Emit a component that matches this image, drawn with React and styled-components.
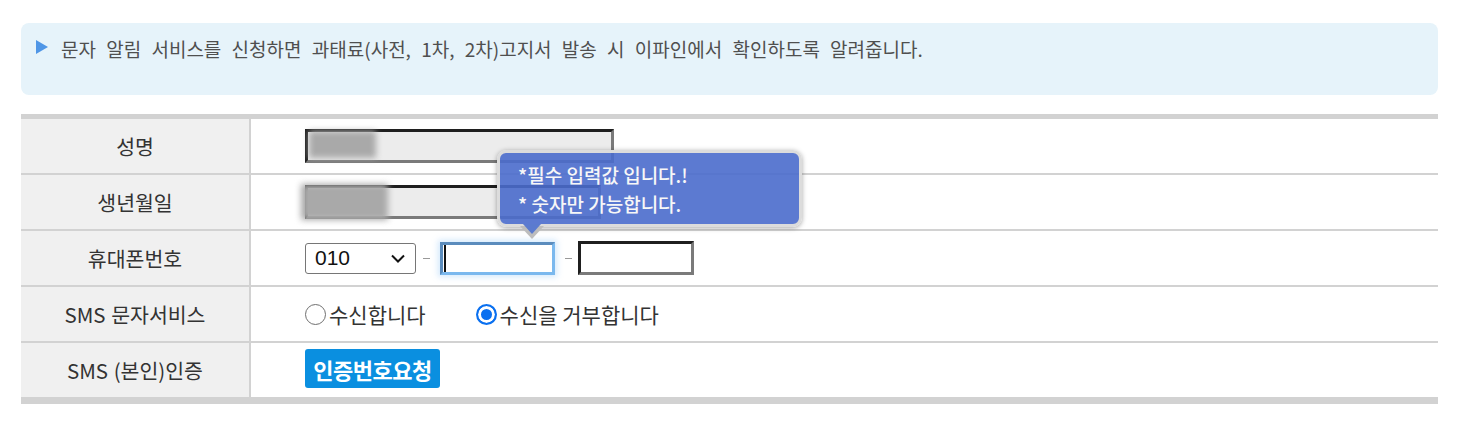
import React from "react";
import styled, { createGlobalStyle } from "styled-components";

const GlobalStyle = createGlobalStyle`
  html, body {
    margin: 0;
    padding: 0;
    background: #fff;
    font-family: "Noto Sans CJK KR", "Noto Sans", sans-serif;
  }
`;

const Page = styled.div`
  width: 1417px;
  padding: 23px 0 0 21px;
`;

const Notice = styled.div`
  height: 72px;
  box-sizing: border-box;
  background: #e6f3fa;
  border-radius: 8px;
  padding: 12px 0 0 15px;
  display: flex;
  align-items: flex-start;
  gap: 13px;
  color: #4f4f4f;
  font-size: 19px;
  word-spacing: 6px;
  line-height: 28px;
`;

const Arrow = styled.span`
  width: 0;
  height: 0;
  margin-top: 5px;
  border-top: 7px solid transparent;
  border-bottom: 7px solid transparent;
  border-left: 12px solid #4f96e6;
`;

const Table = styled.div`
  margin-top: 19px;
  border-top: 5px solid #d2d2d2;
  border-bottom: 7px solid #d2d2d2;
`;

const Row = styled.div`
  display: grid;
  grid-template-columns: 230px 1fr;
  height: 54px;
  border-bottom: ${({ last }) => (last ? "none" : "2px solid #d2d2d2")};
`;

const Label = styled.div`
  background: #f0f0f0;
  border-right: 2px solid #d2d2d2;
  display: flex;
  align-items: center;
  justify-content: center;
  font-size: 20.5px;
  color: #333;
  word-spacing: 1px;
`;

const Cell = styled.div`
  display: flex;
  align-items: center;
  padding-left: 54px;
`;

const Field = styled.div`
  position: relative;
  width: ${({ w }) => w}px;
  height: 34px;
  box-sizing: border-box;
  border: 3px solid;
  border-color: #1f1f1f #7a7a7a #7a7a7a #1f1f1f;
  background: ${({ filled }) => (filled ? "#ececec" : "#fff")};
`;

const Blur = styled.div`
  position: absolute;
  left: ${({ x }) => x}px;
  top: ${({ y }) => y}px;
  width: ${({ w }) => w}px;
  height: ${({ h }) => h}px;
  background: #a9a9a9;
  filter: blur(3px);
`;

const Select = styled.div`
  width: 111px;
  height: 31px;
  box-sizing: border-box;
  border: 1px solid #767676;
  border-radius: 3px;
  display: flex;
  align-items: center;
  justify-content: space-between;
  padding: 0 10px 0 9px;
  font-family: "Liberation Sans", sans-serif;
  font-size: 21px;
  color: #111;
`;

const Dash = styled.span`
  width: 7px;
  height: 1px;
  background: #999;
  margin: 0 ${({ r }) => r}px 0 7px;
`;

const FocusWrap = styled.div`
  position: relative;
  margin-right: 3px;
`;

const FocusField = styled.div`
  width: 115px;
  height: 33px;
  box-sizing: border-box;
  border: 3px solid;
  border-color: #5b8cbd #7ab8ee #7ab8ee #5b8cbd;
  box-shadow: 0 0 6px 2px rgba(130, 190, 245, 0.35);
  position: relative;
  &::before {
    content: "";
    position: absolute;
    left: 1px;
    top: 0;
    bottom: 0;
    width: 2px;
    background: #111;
  }
`;

const Tip = styled.div`
  position: absolute;
  left: 57px;
  top: -92px;
  width: 305px;
  height: 77px;
  box-sizing: border-box;
  border: 3px solid #dcdcdc;
  border-radius: 9px;
  background: rgba(74, 108, 204, 0.9);
  box-shadow: 0 1px 5px rgba(0, 0, 0, 0.35);
  padding: 7px 0 0 18px;
  color: #f7f7f7;
  font-size: 19px;
  font-weight: 500;
  line-height: 29px;
  z-index: 2;
  &::after {
    content: "";
    position: absolute;
    left: 20px;
    bottom: -15px;
    border-left: 12px solid transparent;
    border-right: 12px solid transparent;
    border-top: 13px solid #bdbdbd;
  }
  &::before {
    content: "";
    position: absolute;
    left: 23px;
    bottom: -10px;
    border-left: 9px solid transparent;
    border-right: 9px solid transparent;
    border-top: 10px solid #5b7bcf;
    z-index: 1;
  }
`;

const RadioLabel = styled.label`
  display: flex;
  align-items: center;
  font-size: 21px;
  color: #333;
  margin-right: ${({ gap }) => gap || 0}px;
`;

const Radio = styled.input`
  appearance: none;
  width: 21px;
  height: 21px;
  margin: 0 3px 0 0;
  border-radius: 50%;
  box-sizing: border-box;
  border: 1px solid #6f6f6f;
  background: #fff;
  &:checked {
    border: 2px solid #0a70f0;
    background: #0a70f0;
    box-shadow: inset 0 0 0 3px #fff;
  }
`;

const Button = styled.button`
  width: 135px;
  height: 39px;
  border: none;
  border-radius: 3px;
  background: #0a8fe0;
  color: #fff;
  font-family: "Noto Sans CJK KR", sans-serif;
  font-size: 22px;
  font-weight: 700;
  letter-spacing: -0.5px;
  padding: 0;
  margin-top: -3px;
`;

export default function App() {
  return (
    <Page>
      <GlobalStyle />
      <Notice>
        <Arrow />
        <span>
          문자 알림 서비스를 신청하면 과태료(사전, 1차, 2차)고지서 발송 시 이파인에서
          확인하도록 알려줍니다.
        </span>
      </Notice>
      <Table>
        <Row>
          <Label>성명</Label>
          <Cell>
            <Field w={309} filled>
              <Blur x={1} y={-1} w={67} h={27} />
            </Field>
          </Cell>
        </Row>
        <Row>
          <Label>생년월일</Label>
          <Cell>
            <Field w={296} filled>
              <Blur x={-7} y={-4} w={87} h={36} />
            </Field>
          </Cell>
        </Row>
        <Row>
          <Label>휴대폰번호</Label>
          <Cell>
            <Select>
              <span>010</span>
              <svg width="14" height="9" viewBox="0 0 14 9">
                <path d="M1 1.5 L7 7.5 L13 1.5" fill="none" stroke="#111" strokeWidth="2" />
              </svg>
            </Select>
            <Dash r={10} />
            <FocusWrap>
              <FocusField />
              <Tip>
                <div>*필수 입력값 입니다.!</div>
                <div>* 숫자만 가능합니다.</div>
              </Tip>
            </FocusWrap>
            <Dash r={6} />
            <Field w={116} />
          </Cell>
        </Row>
        <Row>
          <Label>SMS 문자서비스</Label>
          <Cell>
            <RadioLabel gap={50}>
              <Radio type="radio" name="sms" />
              수신합니다
            </RadioLabel>
            <RadioLabel>
              <Radio type="radio" name="sms" defaultChecked />
              수신을 거부합니다
            </RadioLabel>
          </Cell>
        </Row>
        <Row last>
          <Label>SMS (본인)인증</Label>
          <Cell>
            <Button>인증번호요청</Button>
          </Cell>
        </Row>
      </Table>
    </Page>
  );
}
